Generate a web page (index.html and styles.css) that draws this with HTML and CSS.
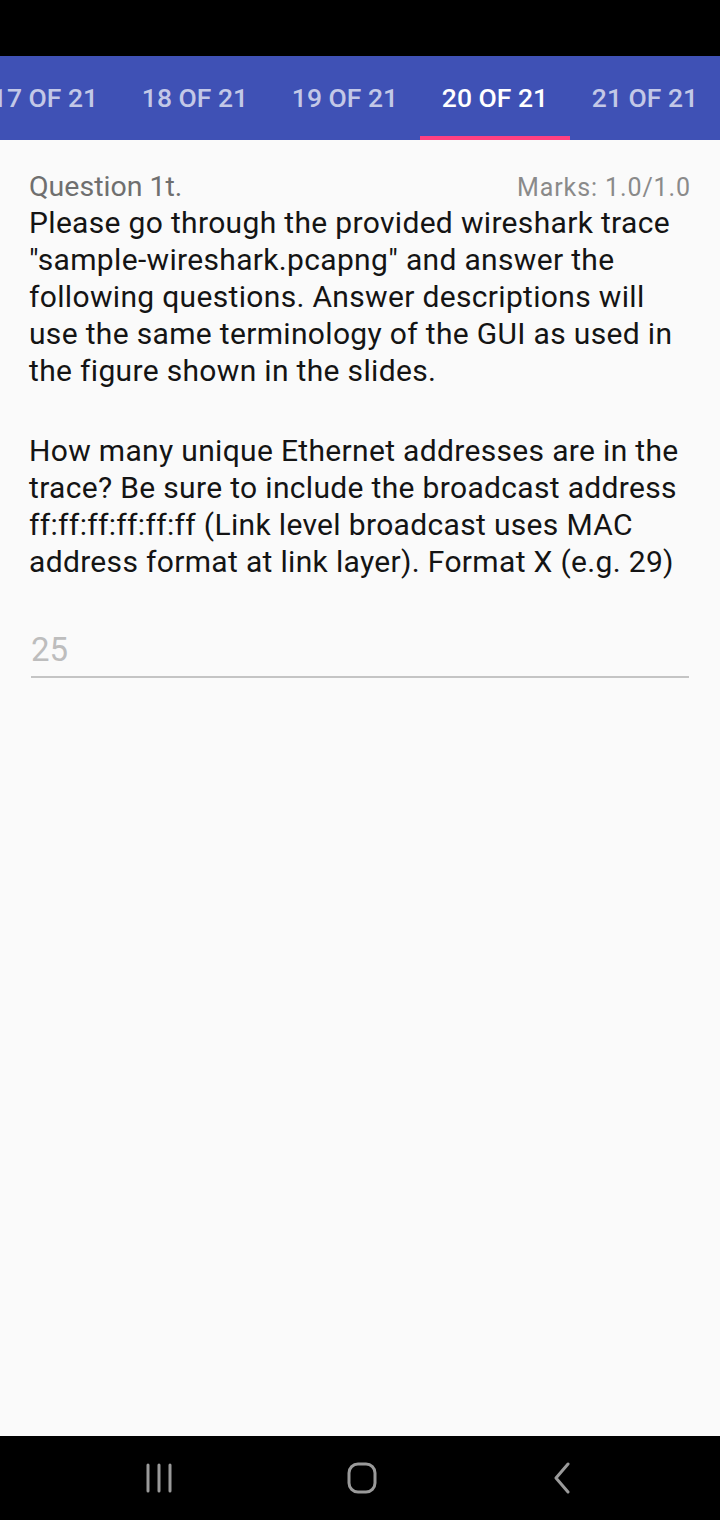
FILE: index.html
```html
<!DOCTYPE html>
<html>
<head>
<meta charset="utf-8">
<link rel="stylesheet" href="styles.css">
</head>
<body>
<div class="screen">
  <div class="status"></div>
  <div class="tabs">
    <div class="tab">17 OF 21</div>
    <div class="tab">18 OF 21</div>
    <div class="tab">19 OF 21</div>
    <div class="tab active">20 OF 21</div>
    <div class="tab">21 OF 21</div>
  </div>
  <div class="content">
    <div class="qhead">
      <span class="qnum">Question 1t.</span>
      <span class="marks">Marks: 1.0/1.0</span>
    </div>
    <p class="qtext">Please go through the provided wireshark trace "sample-wireshark.pcapng" and answer the following questions. Answer descriptions will use the same terminology of the GUI as used in the figure shown in the slides.</p>
    <p class="qtext second">How many unique Ethernet addresses are in the trace? Be sure to include the broadcast address ff:ff:ff:ff:ff:ff (Link level broadcast uses MAC address format at link layer). Format X (e.g. 29)</p>
    <div class="answer">25</div>
  </div>
  <div class="navbar">
    <svg class="nav-icon" width="28" height="30" viewBox="0 0 28 30"><g stroke="#9a9a9a" stroke-width="3" stroke-linecap="round"><line x1="3" y1="2" x2="3" y2="28"/><line x1="14" y1="2" x2="14" y2="28"/><line x1="25" y1="2" x2="25" y2="28"/></g></svg>
    <svg class="nav-icon" width="32" height="32" viewBox="0 0 32 32"><rect x="2" y="2" width="26" height="28" rx="9" fill="none" stroke="#9a9a9a" stroke-width="3"/></svg>
    <svg class="nav-icon" width="20" height="32" viewBox="0 0 20 32"><polyline points="16,2 4,16 16,30" fill="none" stroke="#9a9a9a" stroke-width="3" stroke-linecap="round" stroke-linejoin="round"/></svg>
  </div>
</div>
</body>
</html>
```
FILE: styles.css
```css
html, body {
  margin: 0;
  padding: 0;
}
body {
  font-family: Roboto, "Liberation Sans", sans-serif;
  background: #fafafa;
}
.screen {
  width: 720px;
  height: 1520px;
  display: flex;
  flex-direction: column;
  overflow: hidden;
}
.status {
  height: 56px;
  background: #000;
  flex: none;
}
.tabs {
  height: 84px;
  background: #3f51b5;
  display: flex;
  margin-left: -30px;
  flex: none;
}
.tab {
  width: 150px;
  flex: none;
  display: flex;
  align-items: center;
  justify-content: center;
  color: rgba(255,255,255,0.7);
  font-size: 26.5px;
  font-weight: 500;
  box-sizing: border-box;
  border-bottom: 4px solid transparent;
  padding-top: 2px;
}
.tab.active {
  color: #fff;
  border-bottom-color: #ff4081;
}
.content {
  flex: 1;
  padding: 30px 29px 0 29px;
}
.qhead {
  display: flex;
  justify-content: space-between;
  align-items: baseline;
  line-height: 33px;
}
.qnum {
  font-size: 28.5px;
  color: #6f6f6f;
}
.marks {
  font-size: 25px;
  letter-spacing: 0.9px;
  color: #8a8a8a;
}
.qtext {
  margin: 0;
  font-size: 30px;
  letter-spacing: 0.33px;
  line-height: 37px;
  color: #141414;
}
.qtext.second {
  margin-top: 43px;
}
.answer {
  margin: 50px 2px 0 2px;
  font-size: 33px;
  color: #bdbdbd;
  line-height: 40px;
  padding-bottom: 6px;
  border-bottom: 2px solid #c4c4c4;
}
.navbar {
  height: 84px;
  background: #000;
  flex: none;
  display: flex;
  align-items: center;
  justify-content: space-between;
  padding: 0 148px 0 145px;
}
.nav-icon {
  display: block;
}
```
